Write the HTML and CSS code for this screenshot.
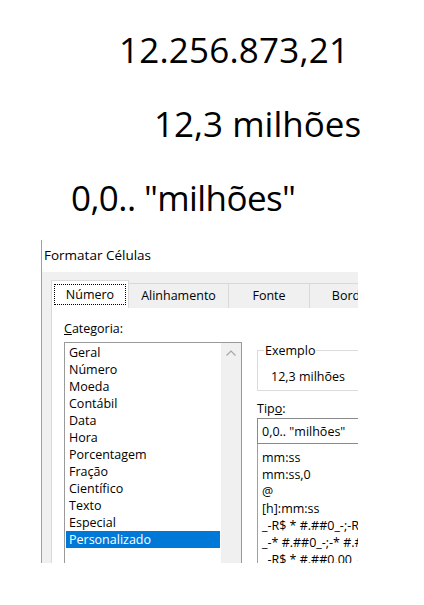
FILE: index.html
```html
<!DOCTYPE html>
<html lang="pt-BR">
<head>
  <meta charset="UTF-8" />
  <meta name="viewport" content="width=device-width, initial-scale=1.0" />
  <title>Formato personalizado em milhões</title>
  <link rel="stylesheet" href="styles.css">
</head>
<body>
  <div class="figures">
    <div class="fig fig-raw">12.256.873,21</div>
    <div class="fig fig-short">12,3 milhões</div>
    <div class="fig fig-code">0,0.. "milhões"</div>
  </div>

  <div class="dialog">
    <div class="titlebar">Formatar Células</div>
    <div class="body">
      <div class="tabs">
        <div class="tab active"><span class="focus">Número</span></div>
        <div class="tab tab-align">Alinhamento</div>
        <div class="tab tab-font">Fonte</div>
        <div class="tab tab-border">Borda</div>
      </div>

      <div class="panel">
        <div class="col-left">
          <div class="label"><u>C</u>ategoria:</div>
          <div class="listbox">
            <ul class="items">
              <li>Geral</li>
              <li>Número</li>
              <li>Moeda</li>
              <li>Contábil</li>
              <li>Data</li>
              <li>Hora</li>
              <li>Porcentagem</li>
              <li>Fração</li>
              <li>Científico</li>
              <li>Texto</li>
              <li>Especial</li>
              <li class="selected">Personalizado</li>
            </ul>
            <div class="scrollbar">
              <svg width="10" height="6" viewBox="0 0 10 6">
                <polyline points="0.5,5.5 5,1 9.5,5.5" fill="none" stroke="#a6a6a6" stroke-width="1.2" />
              </svg>
            </div>
          </div>
        </div>

        <div class="col-right">
          <fieldset class="sample">
            <legend>Exemplo</legend>
            <div class="sample-value">12,3 milhões</div>
          </fieldset>
          <div class="label type-label">Tip<u>o</u>:</div>
          <div class="type-input">0,0.. "milhões"</div>
          <ul class="type-list">
            <li>mm:ss</li>
            <li>mm:ss,0</li>
            <li>@</li>
            <li>[h]:mm:ss</li>
            <li>_-R$ * #.##0_-;-R$ * #.##0_-</li>
            <li>_-* #.##0_-;-* #.##0_-</li>
            <li>_-R$ * #.##0,00_-;-R$ * #.##0,00_-</li>
          </ul>
        </div>
      </div>
    </div>
  </div>
</body>
</html>
```

FILE: styles.css
```css
* {
  box-sizing: border-box;
}
body {
  margin: 0;
  background: #fff;
  color: #000;
  font-family: "Open Sans", "Noto Sans", sans-serif;
}

/* numbers on top */
.figures {
  padding-top: 13px;
  font-size: 35px;
  line-height: 74px;
}
.fig {
  white-space: nowrap;
}
.fig-raw { padding-left: 119px; letter-spacing: 0.2px; }
.fig-short { padding-left: 154px; }
.fig-code { padding-left: 71px; letter-spacing: -0.6px; }

/* cropped dialog */
.dialog {
  margin: 5px 0 0 41px;
  width: 317px;
  height: 323px;
  border-left: 1px solid #a0a0a0;
  overflow: hidden;
  display: flex;
  flex-direction: column;
  font-size: 12.5px;
  line-height: 17px;
}
.titlebar {
  height: 32px;
  flex-shrink: 0;
  background: #fff;
  padding: 7px 0 0 2px;
  font-size: 13.5px;
  white-space: nowrap;
}
.body {
  flex: 1;
  background: #f0f0f0;
  padding: 8px 0 0 9px;
}

.tabs {
  display: flex;
  align-items: flex-end;
  height: 28px;
  position: relative;
  z-index: 1;
}
.tab {
  height: 25px;
  flex-shrink: 0;
  border: 1px solid #d9d9d9;
  border-left: none;
  border-bottom: none;
  background: #f0f0f0;
  padding-top: 3px;
  text-align: center;
  white-space: nowrap;
}
.tab.active {
  width: 78px;
  height: 28px;
  border-left: 1px solid #d9d9d9;
  background: #fff;
  padding: 3px 2px 2px;
}
.focus {
  display: block;
  height: 21px;
  line-height: 19px;
  border: 1px dotted #000;
}
.tab-align { width: 100px; }
.tab-font { width: 81px; }
.tab-border { width: 80px; }

.panel {
  width: 420px;
  height: 300px;
  margin-top: -1px;
  background: #fff;
  border: 1px solid #d9d9d9;
  display: flex;
  gap: 15px;
  padding: 12px 0 0 12px;
}

.label {
  height: 17px;
  white-space: nowrap;
}
.col-left {
  width: 178px;
  flex-shrink: 0;
}
.col-left .label {
  margin-bottom: 5px;
}
.listbox {
  height: 260px;
  border: 1px solid #9a9a9a;
  display: flex;
}
.items {
  flex: 1;
  list-style: none;
  margin: 0;
  padding: 1px 1px 0;
}
.items li {
  height: 17px;
  padding-left: 3px;
  white-space: nowrap;
}
.items li.selected {
  background: #0078d7;
  color: #fff;
}
.scrollbar {
  width: 20px;
  background: #f0f0f0;
  display: flex;
  justify-content: center;
  padding-top: 7px;
}
.scrollbar svg {
  display: block;
}

.col-right {
  width: 200px;
  flex-shrink: 0;
  margin-top: 22px;
}
.sample {
  margin: 0;
  padding: 9px 0 5px 0;
  border: 1px solid #dcdcdc;
}
.sample legend {
  margin-left: 6px;
  padding: 0 1px;
  line-height: 17px;
}
.sample-value {
  padding-left: 13px;
  white-space: nowrap;
}
.type-label {
  margin-top: 9px;
}
.type-input {
  margin-top: 1px;
  height: 26px;
  border: 1px solid #8a8a8a;
  padding: 4px 0 0 4px;
  white-space: nowrap;
}
.type-list {
  list-style: none;
  margin: 0;
  height: 200px;
  border: 1px solid #a0a0a0;
  border-top: none;
  padding: 5px 0 0 4px;
}
.type-list li {
  height: 17px;
  white-space: nowrap;
}
```
